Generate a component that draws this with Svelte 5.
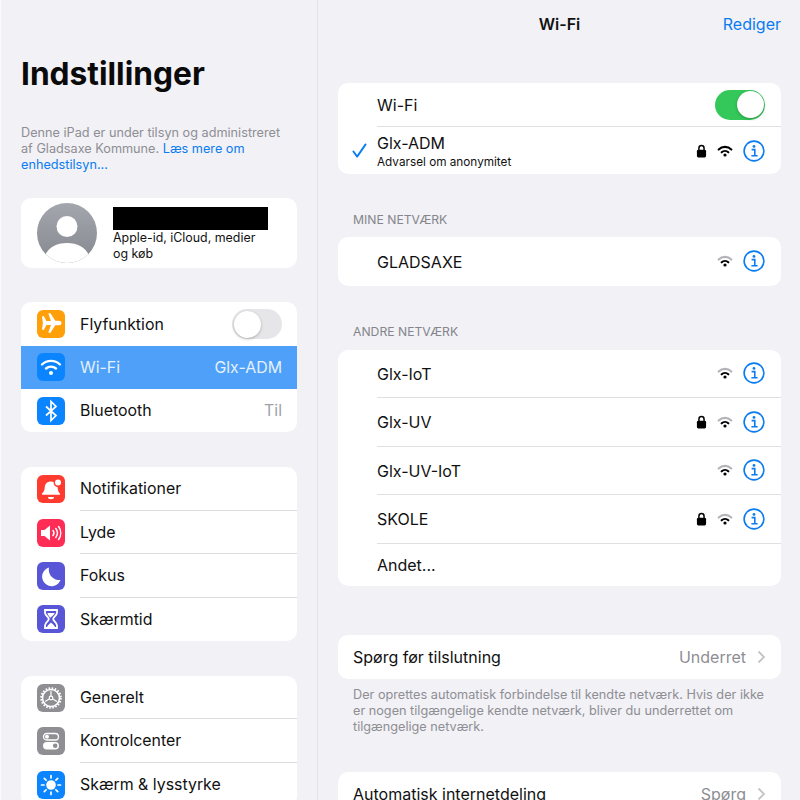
<script>
	const groups = [
		[
			{ label: 'Flyfunktion', icon: 'plane', color: '#ff9f0a', toggle: true },
			{ label: 'Wi-Fi', icon: 'wifi', color: '#0a84ff', value: 'Glx-ADM', active: true },
			{ label: 'Bluetooth', icon: 'bt', color: '#0a84ff', value: 'Til' }
		],
		[
			{ label: 'Notifikationer', icon: 'bell', color: '#ff3b30', line: true },
			{ label: 'Lyde', icon: 'sound', color: '#ff2d55', line: true },
			{ label: 'Fokus', icon: 'moon', color: '#5856d6', line: true },
			{ label: 'Skærmtid', icon: 'glass', color: '#5856d6' }
		],
		[
			{ label: 'Generelt', icon: 'gear', color: '#8e8e93', line: true },
			{ label: 'Kontrolcenter', icon: 'switches', color: '#8e8e93', line: true },
			{ label: 'Skærm & lysstyrke', icon: 'sun', color: '#0a84ff' }
		]
	];

	const others = [
		{ name: 'Glx-IoT', locked: false },
		{ name: 'Glx-UV', locked: true },
		{ name: 'Glx-UV-IoT', locked: false },
		{ name: 'SKOLE', locked: true }
	];
</script>

{#snippet wifiGlyph(weak)}
	<svg class="wifi" viewBox="0 0 24 18">
		<path class:weak d="M2.5 6.8a13.5 13.5 0 0 1 19 0" fill="none" stroke="currentColor" stroke-width="3.2" stroke-linecap="round" />
		<path d="M7 11a7.2 7.2 0 0 1 10 0" fill="none" stroke="currentColor" stroke-width="3.2" stroke-linecap="round" />
		<circle cx="12" cy="15" r="2.4" fill="currentColor" />
	</svg>
{/snippet}

{#snippet lock()}
	<svg class="lock" viewBox="0 0 12 15">
		<path d="M3.2 7V4.400a2.800 2.800 0 0 1 5.600 0V7" fill="none" stroke="#000" stroke-width="1.600" />
		<rect x="1" y="6.200" width="10" height="8.300" rx="1.600" fill="#000" />
	</svg>
{/snippet}

{#snippet info()}
	<svg class="info" viewBox="0 0 22 22">
		<circle cx="11" cy="11" r="9.900" fill="none" stroke="#0a7cf0" stroke-width="1.600" />
		<circle cx="11" cy="6.400" r="1.400" fill="#0a7cf0" />
		<path d="M8.600 9.600h3.200v6M8.400 15.800h6.200" fill="none" stroke="#0a7cf0" stroke-width="1.600" />
	</svg>
{/snippet}

{#snippet appIcon(name)}
	<svg viewBox="0 0 28 28" fill="#fff">
		{#if name === 'plane'}
			<path d="M6 7.500l1.800-.4 2.600 5 4.600-.2-2.700-7.400 2-.4 5 7.700 3.600-.1c1.400 0 2.600.9 2.600 2.300s-1.200 2.300-2.600 2.300l-3.600-.1-5 7.700-2-.4 2.700-7.400-4.600-.2-2.600 5-1.800-.4.900-6.500z" transform="translate(-1 -1)" />
		{:else if name === 'wifi'}
			<g fill="none" stroke="#fff" stroke-width="2.400" stroke-linecap="round">
				<path d="M5 11.500a13 13 0 0 1 18 0" />
				<path d="M9 15.500a7.500 7.500 0 0 1 10 0" />
			</g>
			<circle cx="14" cy="20" r="2" />
		{:else if name === 'bt'}
			<path d="M9 9.500l10 9-5 5V4.500l5 5-10 9" fill="none" stroke="#fff" stroke-width="1.700" />
		{:else if name === 'bell'}
			<path d="M14 6.500c1 0 1.800.2 2.600.6a5 5 0 0 0 4 5.200c.2 3 .9 5 2.400 6.200v1.200H5v-1.200c2-1.500 2.700-4 2.800-6.500.2-3.300 2.700-5.500 6.200-5.500z" />
			<circle cx="21" cy="7.500" r="3" />
			<path d="M11 22h6a3 2.200 0 0 1-6 0z" />
		{:else if name === 'sound'}
			<path d="M4 11h3.500L13 6.500v15L7.500 17H4z" />
			<g fill="none" stroke="#fff" stroke-width="1.500" stroke-linecap="round">
				<path d="M16 11.500a4 4 0 0 1 0 5" />
				<path d="M18.800 9.500a7.500 7.500 0 0 1 0 9" />
				<path d="M21.600 7.500a11 11 0 0 1 0 13" />
			</g>
		{:else if name === 'moon'}
			<path d="M12 5.500a9.500 9.500 0 1 0 11.500 12.500A10.500 10.500 0 0 1 12 5.500z" />
		{:else if name === 'glass'}
			<path d="M8 5h12v2.500c0 3-3.800 4.500-3.800 6.500s3.800 3.500 3.800 6.500V23H8v-2.500c0-3 3.800-4.500 3.800-6.500S8 10.500 8 7.500z" fill="none" stroke="#fff" stroke-width="1.800" />
			<path d="M10.500 8h7c0 2-3.500 3.500-3.500 4.500S10.500 10 10.500 8zM10 22c.5-2 3-3 4-4.500 1 1.500 3.500 2.500 4 4.500z" />
		{:else if name === 'gear'}
			<circle cx="14" cy="14" r="8.500" fill="none" stroke="#fff" stroke-width="1.600" />
			<circle cx="14" cy="14" r="9.800" fill="none" stroke="#fff" stroke-width="2" stroke-dasharray="1.600 1.500" />
			<circle cx="14" cy="14" r="1.800" fill="none" stroke="#fff" stroke-width="1.200" />
			<path d="M14 12V7M15.700 15l4.300 2.500M12.300 15L8 17.500" fill="none" stroke="#fff" stroke-width="1.200" />
		{:else if name === 'switches'}
			<rect x="6.500" y="6.500" width="15" height="6.500" rx="3.250" fill="none" stroke="#fff" stroke-width="1.300" />
			<circle cx="10" cy="9.750" r="2" />
			<rect x="6" y="15" width="16" height="7.500" rx="3.750" />
			<circle cx="18.200" cy="18.750" r="2.300" fill="#8e8e93" />
		{:else if name === 'sun'}
			<circle cx="14" cy="14" r="4.800" />
			<g stroke="#fff" stroke-width="1.700" stroke-linecap="round">
				<path d="M14 4.500v2.500M14 21v2.500M4.500 14H7M21 14h2.500M7.300 7.300l1.800 1.800M18.900 18.900l1.800 1.800M7.300 20.700l1.800-1.800M18.900 9.100l1.800-1.800" />
			</g>
		{/if}
	</svg>
{/snippet}

<div class="split">
	<aside class="sidebar">
		<h1>Indstillinger</h1>
		<p class="notice">Denne iPad er under tilsyn og administreret af Gladsaxe Kommune. <span class="link">Læs mere om enhedstilsyn...</span></p>

		<div class="card profile">
			<div class="avatar">
				<svg viewBox="0 0 60 60">
					<circle cx="30" cy="23.500" r="10.500" fill="#fff" />
					<path d="M8 53c3-9 12-13 22-13s19 4 22 13a30 30 0 0 1-44 0z" fill="#fff" />
				</svg>
			</div>
			<div class="who">
				<div class="redacted"></div>
				<div class="sub">Apple-id, iCloud, medier og køb</div>
			</div>
		</div>

		{#each groups as rows}
			<div class="card group">
				{#each rows as row}
					<div class="row" class:active={row.active}>
						<span class="tile" style="background: {row.color}">{@render appIcon(row.icon)}</span>
						<div class="row-body" class:line={row.line}>
							<span class="name">{row.label}</span>
							{#if row.value}<span class="value">{row.value}</span>{/if}
							{#if row.toggle}<span class="switch off"><i></i></span>{/if}
						</div>
					</div>
				{/each}
			</div>
		{/each}
	</aside>

	<main class="detail">
		<header class="nav">
			<span class="nav-title">Wi-Fi</span>
			<span class="nav-edit">Rediger</span>
		</header>

		<div class="card net-card">
			<div class="net wifi-row">
				<div class="net-body line">
					<span class="net-name">Wi-Fi</span>
					<span class="switch on"><i></i></span>
				</div>
			</div>
			<div class="net current">
				<svg class="check" viewBox="0 0 16 16">
					<path d="M1.500 9l4 5.500L14.500 1.500" fill="none" stroke="#0a7cf0" stroke-width="2" stroke-linecap="round" stroke-linejoin="round" />
				</svg>
				<div class="net-body">
					<div class="stack">
						<span class="net-name">Glx-ADM</span>
						<span class="warn">Advarsel om anonymitet</span>
					</div>
					<div class="glyphs">
						{@render lock()}
						{@render wifiGlyph(false)}
						{@render info()}
					</div>
				</div>
			</div>
		</div>

		<div class="section">MINE NETVÆRK</div>
		<div class="card net-card">
			<div class="net tall">
				<div class="net-body">
					<span class="net-name">GLADSAXE</span>
					<div class="glyphs">
						{@render wifiGlyph(true)}
						{@render info()}
					</div>
				</div>
			</div>
		</div>

		<div class="section other">ANDRE NETVÆRK</div>
		<div class="card net-card">
			{#each others as n}
				<div class="net tall">
					<div class="net-body line">
						<span class="net-name">{n.name}</span>
						<div class="glyphs">
							{#if n.locked}{@render lock()}{/if}
							{@render wifiGlyph(true)}
							{@render info()}
						</div>
					</div>
				</div>
			{/each}
			<div class="net last">
				<div class="net-body"><span class="net-name">Andet...</span></div>
			</div>
		</div>

		<div class="card plain first">
			<span class="net-name">Spørg før tilslutning</span>
			<span class="more">Underret<svg class="chev" viewBox="0 0 9 14"><path d="M1.500 1.500L7 7l-5.500 5.500" fill="none" stroke="#c4c4c8" stroke-width="1.800" /></svg></span>
		</div>
		<p class="foot">Der oprettes automatisk forbindelse til kendte netværk. Hvis der ikke er nogen tilgængelige kendte netværk, bliver du underrettet om tilgængelige netværk.</p>
		<div class="card plain">
			<span class="net-name">Automatisk internetdeling</span>
			<span class="more">Spørg<svg class="chev" viewBox="0 0 9 14"><path d="M1.500 1.500L7 7l-5.500 5.500" fill="none" stroke="#c4c4c8" stroke-width="1.800" /></svg></span>
		</div>
	</main>
</div>

<style>
	:global(body) {
		margin: 0;
		background: #f1f1f6;
	}

	.split {
		display: flex;
		width: 800px;
		height: 800px;
		overflow: hidden;
		font-family: Inter, "Liberation Sans", sans-serif;
		color: #111;
		background: #f1f1f6;
	}

	.sidebar {
		box-sizing: border-box;
		width: 318px;
		height: 800px;
		flex-shrink: 0;
		padding: 0 20px;
		border-left: 1px solid #fafafc;
		border-right: 1px solid #e4e4e8;
		overflow: hidden;
	}

	h1 {
		margin: 54px 0 0;
		font-size: 31.700px;
		line-height: 40px;
		font-weight: 700;
		color: #0a0a0a;
	}

	.notice {
		margin: 31px 0 0;
		max-width: 265px;
		font-size: 12.700px;
		line-height: 16px;
		color: #8e8e93;
	}

	.link {
		color: #0a7cf0;
	}

	.card {
		background: #fff;
		border-radius: 10px;
		overflow: hidden;
	}

	.profile {
		display: flex;
		align-items: center;
		height: 70px;
		margin-top: 25px;
		margin-bottom: -0.700px;
		padding-left: 16px;
	}

	.avatar {
		width: 60px;
		height: 60px;
		border-radius: 50%;
		overflow: hidden;
		background: linear-gradient(#a4a6ae, #868890);
		flex-shrink: 0;
	}

	.avatar svg {
		display: block;
	}

	.who {
		margin-left: 16px;
		padding-top: 9px;
		align-self: flex-start;
	}

	.redacted {
		width: 155px;
		height: 23px;
		background: #000;
	}

	.sub {
		font-size: 12.400px;
		line-height: 16px;
		width: 150px;
		color: #111;
	}

	.group {
		margin-top: 35px;
	}

	.row {
		display: flex;
		align-items: center;
		height: 43.400px;
		padding-left: 16px;
	}

	.tile {
		width: 28px;
		height: 28px;
		border-radius: 6px;
		flex-shrink: 0;
		margin-right: 15px;
	}

	.tile svg {
		display: block;
		width: 28px;
		height: 28px;
	}

	.row-body {
		flex: 1;
		height: 100%;
		box-sizing: border-box;
		display: flex;
		align-items: center;
		justify-content: space-between;
		padding-right: 15px;
		min-width: 0;
	}

	.row-body.line {
		border-bottom: 1px solid #dcdce0;
	}

	.name {
		font-size: 15.900px;
	}

	.value {
		font-size: 15.900px;
		color: #a2a2a8;
	}

	.row.active {
		background: #4ea0f8;
	}

	.row.active .name,
	.row.active .value {
		color: #e4f0fe;
	}

	.switch {
		display: block;
		width: 50px;
		height: 30px;
		border-radius: 15px;
		box-sizing: border-box;
		padding: 1.500px;
	}

	.switch i {
		display: block;
		width: 27px;
		height: 27px;
		border-radius: 50%;
		background: #fff;
		box-shadow: 0 1px 3px rgba(0, 0, 0, 0.25);
	}

	.switch.off {
		background: #e6e6e9;
	}

	.switch.on {
		background: #34c759;
		display: flex;
		justify-content: flex-end;
	}

	.detail {
		flex: 1;
		min-width: 0;
		padding: 0 19px 0 20px;
	}

	.nav {
		display: flex;
		align-items: center;
		justify-content: center;
		height: 48px;
		position: relative;
	}

	.nav-title {
		font-size: 16px;
		font-weight: 600;
	}

	.nav-edit {
		position: absolute;
		right: 0;
		font-size: 16px;
		color: #0a7cf0;
	}

	.nav + .net-card {
		margin-top: 35px;
	}

	.net {
		display: flex;
		align-items: center;
	}

	.wifi-row {
		height: 44px;
		padding-left: 39px;
	}

	.current {
		height: 47px;
		position: relative;
		padding-left: 39px;
	}

	.tall {
		height: 48.500px;
		padding-left: 39px;
	}

	.tall .net-name {
		padding-top: 1px;
	}

	.last {
		height: 42px;
		padding-left: 39px;
	}

	.check {
		position: absolute;
		left: 14px;
		top: 16px;
		width: 15px;
		height: 15px;
	}

	.net-body {
		flex: 1;
		height: 100%;
		box-sizing: border-box;
		display: flex;
		align-items: center;
		justify-content: space-between;
		padding-right: 16px;
	}

	.net-body.line {
		border-bottom: 1px solid #e0e0e4;
	}

	.net-name {
		font-size: 16px;
	}

	.stack {
		display: flex;
		flex-direction: column;
		padding-top: 2px;
	}

	.stack .net-name {
		line-height: 19px;
	}

	.warn {
		font-size: 11.750px;
		line-height: 15px;
		padding-top: 2px;
	}

	.glyphs {
		display: flex;
		align-items: center;
	}

	.glyphs :global(svg) {
		display: block;
	}

	.lock {
		width: 11px;
		height: 14px;
		margin-right: 10px;
	}

	.wifi {
		width: 16px;
		height: 12px;
		margin-right: 10px;
		color: #000;
	}

	.wifi .weak {
		stroke: #b4b4b8;
	}

	.info {
		width: 22px;
		height: 22px;
	}

	.section {
		margin: 38px 0 0 15px;
		font-size: 12.200px;
		line-height: 16px;
		color: #85858b;
		padding-bottom: 9px;
	}

	.section.other {
		padding-bottom: 10px;
	}

	.plain {
		display: flex;
		align-items: center;
		justify-content: space-between;
		height: 44px;
		padding: 0 15px;
	}

	.plain.first {
		margin-top: 49px;
	}

	.more {
		display: flex;
		align-items: center;
		font-size: 16px;
		color: #8e8e93;
	}

	.chev {
		width: 9px;
		height: 14px;
		margin-left: 11px;
	}

	.foot {
		margin: 8px 15px 0;
		font-size: 12.700px;
		line-height: 16px;
		color: #8e8e93;
		height: 85px;
	}
</style>
